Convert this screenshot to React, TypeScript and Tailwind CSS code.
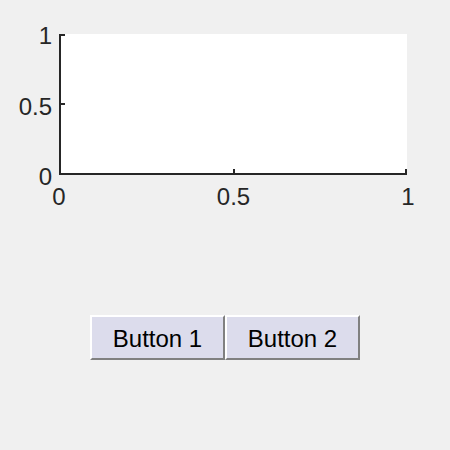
import React from 'react';

const font = { fontFamily: '"Liberation Sans", Arial, sans-serif' };

const Button = ({ label }: { label: string }) => (
  <button className="w-[135px] h-[45px] pt-[2px] bg-[#dcdcec] border-2 border-t-white border-l-white border-b-[#808080] border-r-[#808080] text-black text-[24px] leading-none">
    {label}
  </button>
);

export default function App() {
  return (
    <div
      className="w-[450px] h-[450px] bg-[#f0f0f0] flex flex-col pt-[34px] text-[#262626]"
      style={font}
    >
      {/* axes */}
      <div className="flex items-start pl-[19px]">
        <div className="w-[33px] h-[165px] -mt-[10px] mr-[7px] flex flex-col items-end justify-between text-[24px] leading-none">
          <span>1</span>
          <span>0.5</span>
          <span>0</span>
        </div>
        <div className="flex flex-col">
          <div className="relative w-[348px] h-[141px] bg-white border-l-2 border-b-2 border-[#262626]">
            {/* tick marks */}
            <div className="absolute left-0 top-0 w-[4px] h-[2px] bg-[#262626]" />
            <div className="absolute left-0 top-[69px] w-[4px] h-[2px] bg-[#262626]" />
            <div className="absolute bottom-0 left-[172px] w-[2px] h-[4px] bg-[#262626]" />
            <div className="absolute bottom-0 right-0 w-[2px] h-[4px] bg-[#262626]" />
          </div>
          <div className="mt-[10px] flex justify-between text-[24px] leading-none">
            <span className="w-4 -ml-2 text-center">0</span>
            <span>0.5</span>
            <span className="w-4 -mr-[9px] text-center">1</span>
          </div>
        </div>
      </div>

      {/* buttons */}
      <div className="flex mt-[106px] ml-[90px]">
        <Button label="Button 1" />
        <Button label="Button 2" />
      </div>
    </div>
  );
}
